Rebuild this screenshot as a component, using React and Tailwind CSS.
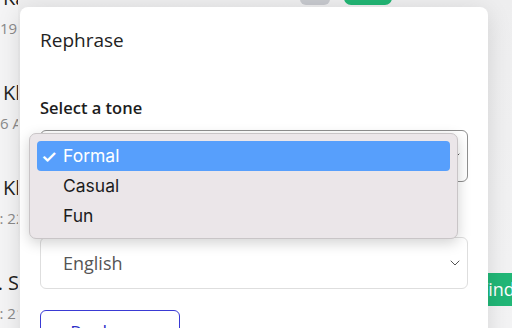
import { ChevronDown } from "lucide-react";

const people = [
  { name: "Kareem", date: "19 Nov", nameShift: "", dateShift: "" },
  { name: "Khalid Amir", date: "6 Aug 2023", nameShift: "", dateShift: "" },
  { name: "Khadija Noor", date: "Dec: 22", nameShift: "", dateShift: "ml-[-30px]" },
  { name: "A. Sloan", date: "Dec: 21", nameShift: "ml-[-18px]", dateShift: "ml-[-30px]" },
];

export default function App() {
  return (
    <div className="relative h-[328px] w-[512px] overflow-hidden bg-[#ececef] font-['Open_Sans',sans-serif]">
      {/* background page */}
      <div className="flex h-full">
        <div className="-mt-[18px] w-[18px] shrink-0 overflow-hidden bg-[#f4f4f5] pl-[3px]">
          {people.map((p, i) => (
            <div key={i} className="flex h-[95px] flex-col pt-[3px]">
              <div className={`whitespace-nowrap text-[20px] leading-[26px] text-[#1f1f1f] ${p.nameShift}`}>{p.name}</div>
              <div className={`-ml-[3px] mt-[7px] whitespace-nowrap text-[15px] leading-[20px] text-[#8a8a8a] ${p.dateShift}`}>{p.date}</div>
            </div>
          ))}
        </div>
        <div className="min-w-0 flex-1 bg-[linear-gradient(to_bottom,#eeeeef,#f3f3f4)]">
          <div className="-mt-[10px] flex items-end gap-[14px] pl-[282px]">
            <div className="h-[15px] w-[30px] rounded-b-md bg-[#c7c9ce]" />
            <div className="h-[14px] w-[48px] rounded-full bg-[#22b574]" />
          </div>
          <div className="ml-[452px] mt-[268px] flex h-[33px] w-[90px] items-center bg-[#21b777] pl-[9px] text-[18px] text-white">
            Find
          </div>
        </div>
      </div>

      {/* modal */}
      <div className="absolute left-[20px] top-[7px] h-[400px] w-[468px] rounded-lg bg-white px-[20px] shadow-[0_4px_24px_rgba(0,0,0,0.12)]">
        <div className="pt-[20px] text-[19px] leading-[26px] text-[#222]">Rephrase</div>
        <div className="mt-[43px] text-[16.5px] font-semibold leading-[24px] text-[#1d1d1d]">Select a tone</div>
        <div className="mt-[10px] flex h-[52px] items-center justify-between rounded-md border border-[#8f8f8f] pl-[22px] pr-[4px]">
          <span className="text-[18px] text-[#333]">Formal</span>
          <ChevronDown className="h-[16px] w-[16px] text-[#555]" strokeWidth={1.5} />
        </div>
        <div className="mt-[14px] text-[16.5px] font-semibold leading-[24px] text-[#1d1d1d]">Output language</div>
        <div className="mt-[17px] flex h-[52px] items-center justify-between rounded-md border border-[#dedede] pl-[22px] pr-[4px]">
          <span className="text-[18px] text-[#555]">English</span>
          <ChevronDown className="h-[16px] w-[16px] text-[#555]" strokeWidth={1.5} />
        </div>
        <div className="mt-[21px] flex h-[44px] w-[140px] items-center justify-center rounded-md border border-[#3a3ad4] text-[18px] text-[#2f2fc8]">
          Rephrase
        </div>
      </div>

      {/* native select popup */}
      <div className="absolute left-[29px] top-[133px] w-[429px] rounded-[7px] border border-[#c9c5c7] bg-[#ebe6e9] px-[7px] py-[7px] font-['Inter',sans-serif] text-[17.5px] text-[#1c1c1c] shadow-[0_4px_14px_rgba(0,0,0,0.18)]">
        <div className="flex h-[30px] items-center rounded-[4px] bg-[#579ffc] pl-[4px] text-white">
          <span className="w-[22px] text-[18px] font-semibold">✓</span>
          <span>Formal</span>
        </div>
        <div className="flex h-[30px] items-center pl-[26px]">Casual</div>
        <div className="flex h-[30px] items-center pl-[26px]">Fun</div>
      </div>
    </div>
  );
}
